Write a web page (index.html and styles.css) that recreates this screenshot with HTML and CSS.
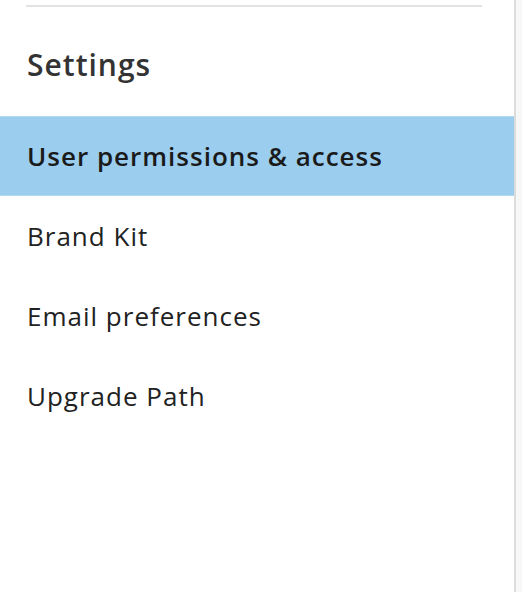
FILE: index.html
```html
<!DOCTYPE html>
<html>
<head>
<meta charset="utf-8">
<link rel="stylesheet" href="styles.css">
</head>
<body>
<div class="page">
  <nav class="sidebar">
    <div class="divider"></div>
    <h2 class="title">Settings</h2>
    <ul class="menu">
      <li class="item active">User permissions &amp; access</li>
      <li class="item">Brand Kit</li>
      <li class="item">Email preferences</li>
      <li class="item">Upgrade Path</li>
    </ul>
  </nav>
  <div class="rest"></div>
</div>
</body>
</html>
```
FILE: styles.css
```css
html, body {
  margin: 0;
  padding: 0;
}
body {
  font-family: "Open Sans", "Liberation Sans", sans-serif;
  color: #222;
  background: #f7f7f7;
}
.page {
  display: flex;
  height: 592px;
}
.sidebar {
  width: 514px;
  background: #fff;
  border-right: 2px solid #dcdcdc;
  display: flex;
  flex-direction: column;
}
.rest {
  flex: 1;
  background: #f7f7f7;
}
.divider {
  margin: 5px 32px 0 26px;
  height: 2px;
  background: #e2e2e2;
}
.title {
  margin: 0;
  padding: 6px 27px 0;
  height: 109px;
  box-sizing: border-box;
  display: flex;
  align-items: center;
  font-size: 30px;
  font-weight: 600;
  letter-spacing: 1px;
  color: #333;
}
.menu {
  list-style: none;
  margin: 0;
  padding: 0;
}
.item {
  height: 80px;
  padding: 0 27px;
  display: flex;
  align-items: center;
  font-size: 26px;
  letter-spacing: 1px;
  color: #222;
  box-sizing: border-box;
}
.item.active {
  background: #9acdee;
  border-top: 1px solid #b3d9f3;
  border-bottom: 1px solid #b3d9f3;
  font-weight: 600;
  color: #1a1a1a;
}
```
